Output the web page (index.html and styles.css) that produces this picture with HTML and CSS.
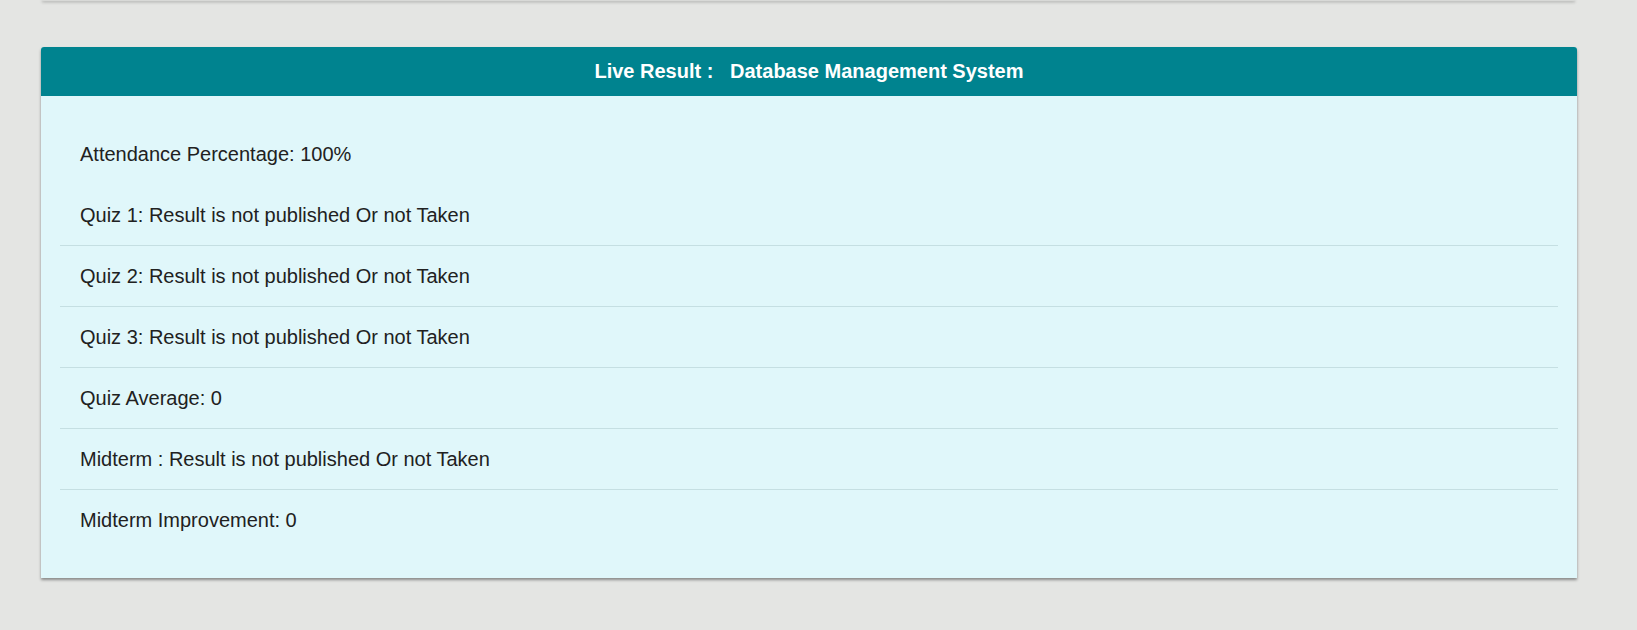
FILE: index.html
```html
<!DOCTYPE html>
<html lang="en">
<head>
<meta charset="utf-8">
<title>Live Result</title>
<link rel="stylesheet" href="styles.css">
</head>
<body>
<div class="page">
  <div class="prev-card"></div>
  <section class="card">
    <header class="card-header">Live Result :&nbsp;&nbsp; Database Management System</header>
    <div class="card-body">
      <ul class="result-list">
        <li class="result-item first">Attendance Percentage: 100%</li>
        <li class="result-item first">Quiz 1: Result is not published Or not Taken</li>
        <li class="result-item">Quiz 2: Result is not published Or not Taken</li>
        <li class="result-item">Quiz 3: Result is not published Or not Taken</li>
        <li class="result-item">Quiz Average: 0</li>
        <li class="result-item">Midterm : Result is not published Or not Taken</li>
        <li class="result-item">Midterm Improvement: 0</li>
      </ul>
    </div>
  </section>
</div>
</body>
</html>
```

FILE: styles.css
```css
html, body {
  margin: 0;
  padding: 0;
}
body {
  background: #e4e5e3;
  font-family: "Liberation Sans", Arial, sans-serif;
  color: #212121;
  min-height: 630px;
}
.page {
  padding: 0 60px 0 41px;
}
.prev-card {
  margin: 0 2px 0 1px;
  height: 1px;
  background: #d8d9d7;
  box-shadow: 0 1px 3px rgba(0, 0, 0, 0.45);
}
.card {
  margin-top: 46px;
  width: 1536px;
  background: #e0f7fa;
  border-radius: 3px 3px 0 0;
  box-shadow: 0 2px 3px rgba(0, 0, 0, 0.4);
}
.card-header {
  background: #00838f;
  color: #ffffff;
  font-weight: bold;
  font-size: 20px;
  line-height: 48px;
  padding-bottom: 1px;
  text-align: center;
  border-radius: 3px 3px 0 0;
}
.card-body {
  padding: 27px 19px 28px 19px;
}
.result-list {
  list-style: none;
  margin: 0;
  padding: 0;
}
.result-item {
  font-size: 20px;
  line-height: 24px;
  padding: 18px 20px 18px 20px;
  border-top: 1px solid #c5dfe2;
}
.result-item.first {
  border-top-color: transparent;
}
```
